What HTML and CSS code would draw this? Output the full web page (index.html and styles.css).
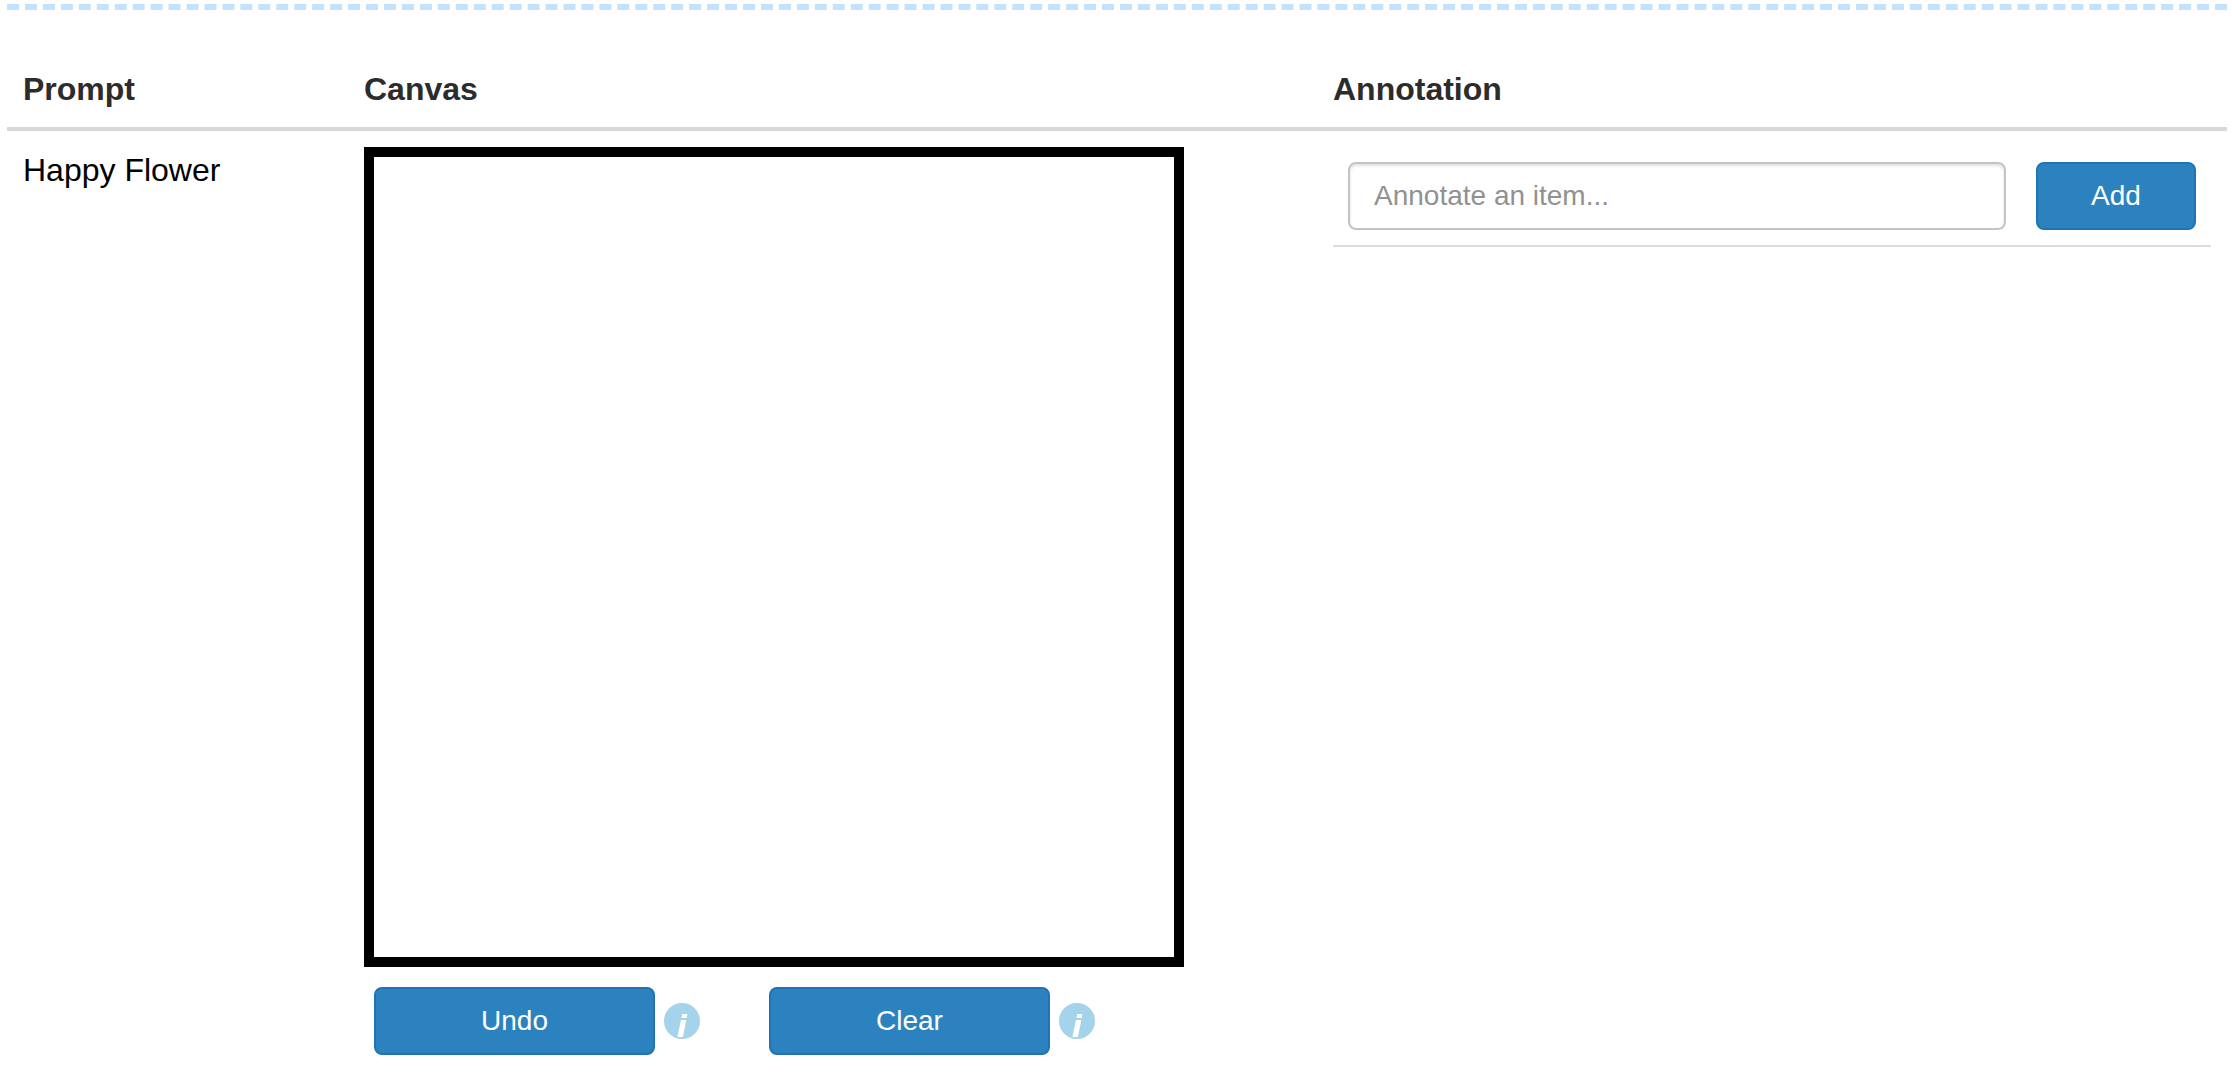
FILE: index.html
```html
<!DOCTYPE html>
<html lang="en">
<head>
<meta charset="utf-8">
<title>Canvas annotation</title>
<link rel="stylesheet" href="styles.css">
</head>
<body>
<hr class="divider">
<table class="task">
  <colgroup>
    <col class="col-prompt">
    <col class="col-canvas">
    <col>
  </colgroup>
  <thead>
    <tr><th scope="col">Prompt</th><th scope="col">Canvas</th><th scope="col">Annotation</th></tr>
  </thead>
  <tbody>
    <tr>
      <td>Happy Flower</td>
      <td>
        <canvas class="sketch" width="800" height="800"></canvas>
        <div class="tools">
          <div class="tool">
            <button type="button" class="btn btn-tool">Undo</button>
            <svg class="info" viewBox="0 0 36 36" aria-hidden="true"><circle cx="18" cy="18" r="18"/><path d="M18.3 11H23.4L22.6 15H17.5ZM16.9 17H22.3L18.9 34H13.4Z"/></svg>
          </div>
          <div class="tool">
            <button type="button" class="btn btn-tool">Clear</button>
            <svg class="info" viewBox="0 0 36 36" aria-hidden="true"><circle cx="18" cy="18" r="18"/><path d="M18.3 11H23.4L22.6 15H17.5ZM16.9 17H22.3L18.9 34H13.4Z"/></svg>
          </div>
        </div>
      </td>
      <td>
        <form class="annotate">
          <input class="field" type="text" placeholder="Annotate an item..." aria-label="Annotate an item">
          <button type="button" class="btn btn-add">Add</button>
        </form>
      </td>
    </tr>
  </tbody>
</table>
</body>
</html>
```
FILE: styles.css
```css
* {
  box-sizing: border-box;
}

body {
  margin: 0;
  padding: 4px 5px 0 7px;
  background: #fff;
  color: #000;
  font-family: "Liberation Sans", Helvetica, Arial, sans-serif;
  font-size: 32px;
  line-height: 46px;
}

.divider {
  margin: 0;
  border: 0;
  border-top: 6px dashed #c2e2ff;
}

.task {
  width: 100%;
  table-layout: fixed;
  border-collapse: separate;
  border-spacing: 0;
}

.col-prompt {
  width: 341px;
}

.col-canvas {
  width: 969px;
}

.task th {
  padding: 56px 16px 15px;
  border-bottom: 4px solid #d7d8d8;
  color: #2c2c2c;
  text-align: left;
}

.task td {
  padding: 16px;
  vertical-align: top;
}

.sketch {
  display: block;
  border: 10px solid #000;
}

.tools {
  display: flex;
  gap: 69px;
  padding: 20px 10px 0;
}

.tool {
  display: flex;
  align-items: center;
  gap: 9px;
}

.btn {
  height: 68px;
  padding: 0;
  border: 2px solid #2074b4;
  border-radius: 8px;
  background: #2c82be;
  color: #fff;
  font: inherit;
  font-size: 28px;
}

.btn-tool {
  width: 281px;
}

.btn-add {
  width: 160px;
}

.info {
  width: 36px;
  height: 36px;
}

.info circle {
  fill: #a5d3eb;
}

.info path {
  fill: #fff;
}

.annotate {
  display: flex;
  gap: 30px;
  padding: 15px;
  border-bottom: 2px solid #d8dfe3;
}

.field {
  flex: 1;
  min-width: 0;
  height: 68px;
  padding: 0 24px;
  border: 2px solid #c4c4c4;
  border-radius: 8px;
  background: #fff;
  box-shadow: inset 0 2px 3px rgba(0, 0, 0, 0.12);
  font: inherit;
  font-size: 28px;
}

.field::placeholder {
  color: #919191;
  opacity: 1;
}
```
